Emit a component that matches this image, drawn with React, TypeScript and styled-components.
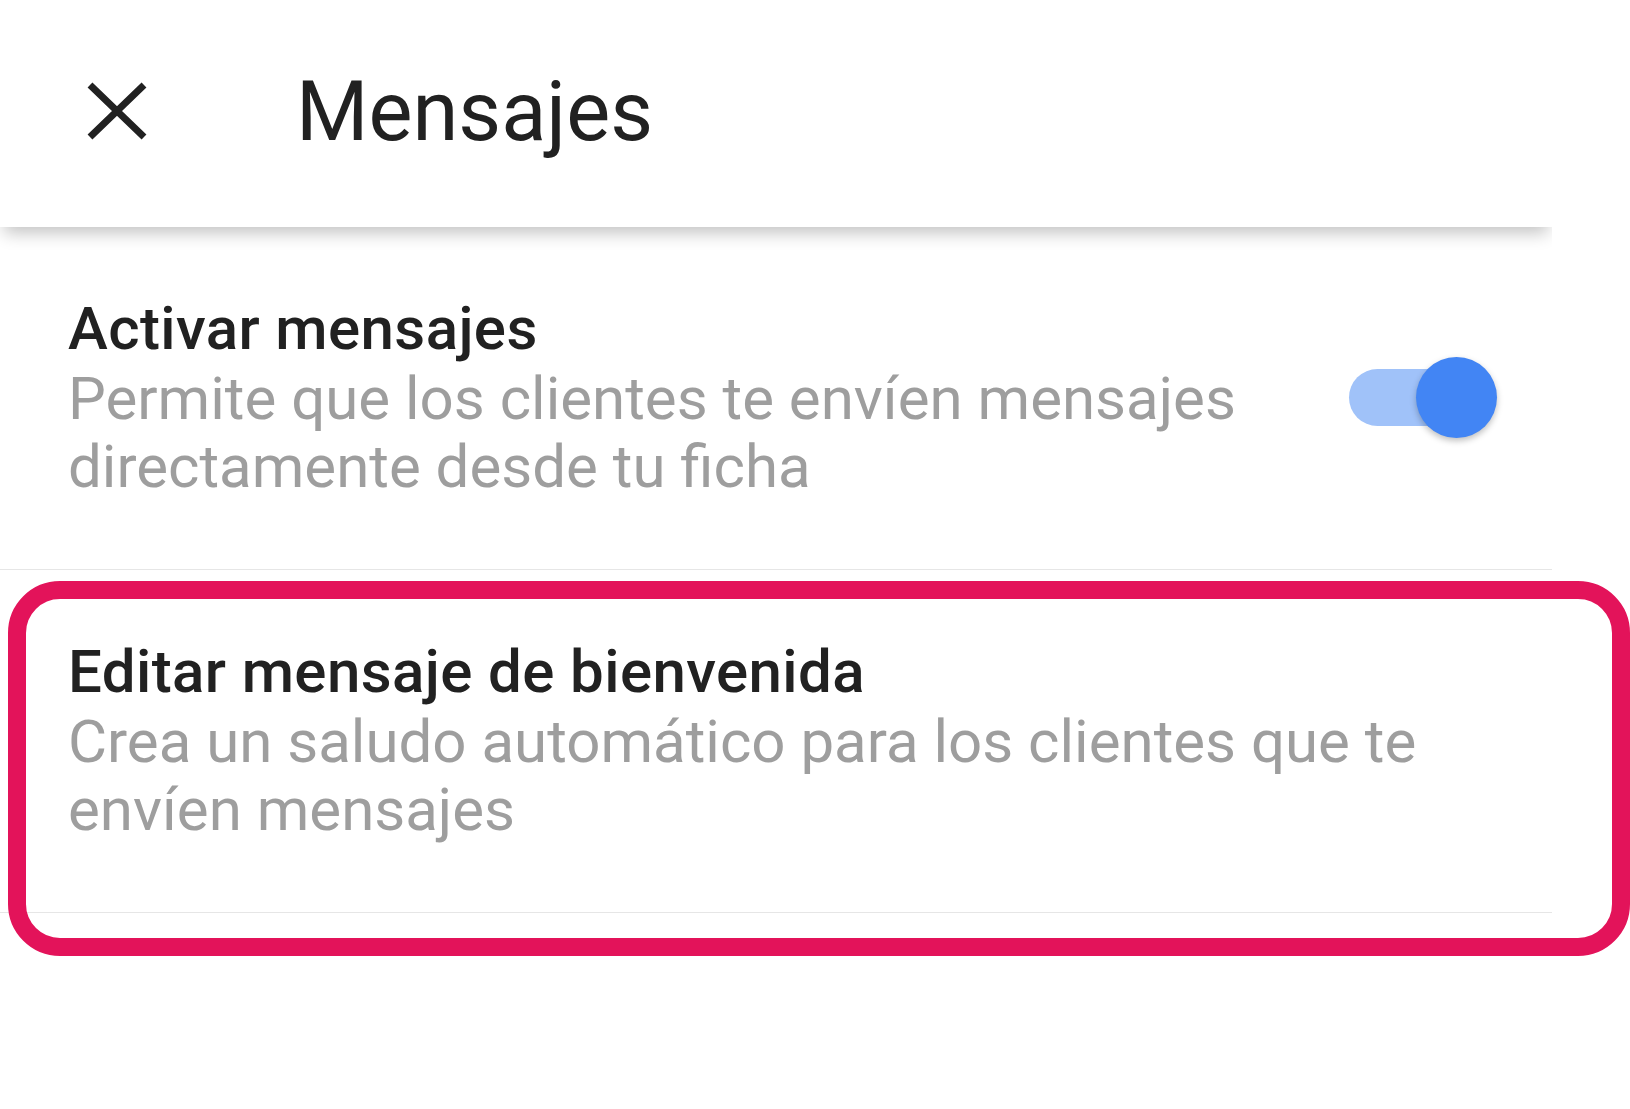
import React from "react";
import styled, { createGlobalStyle } from "styled-components";

const Global = createGlobalStyle`
  html, body { margin: 0; padding: 0; background: #ffffff; }
  body { font-family: Roboto, "Noto Sans", Arial, sans-serif; }
`;

const Page = styled.div`
  position: relative;
  width: 1630px;
  height: 1109px;
  background: #ffffff;
  overflow: hidden;
`;

const Screen = styled.div`
  width: 1552px;
  display: flex;
  flex-direction: column;
`;

const Header = styled.header`
  position: relative;
  z-index: 1;
  height: 227px;
  display: flex;
  align-items: center;
  padding-left: 86px;
  background: #ffffff;
  box-shadow: 0 10px 16px -4px rgba(0, 0, 0, 0.24);
  clip-path: inset(0 0 -40px 0);
`;

const CloseButton = styled.button`
  width: 62px;
  height: 58px;
  padding: 0;
  border: 0;
  background: none;
  display: flex;
  margin-top: -5px;
`;

const Title = styled.h1`
  margin: -4px 0 0 148px;
  font-family: Roboto, sans-serif;
  font-weight: 400;
  font-size: 83px;
  line-height: 1;
  color: #212121;
`;

const Row = styled.div`
  display: flex;
  align-items: center;
  padding: 66px 55px 68px 68px;
  border-bottom: 1px solid #e6e6e6;
`;

const TextCol = styled.div<{ $narrow?: boolean }>`
  flex: 1;
  min-width: 0;
  padding-right: ${(p) => (p.$narrow ? "100px" : "14px")};
`;

const RowTitle = styled.div`
  font-family: Roboto, sans-serif;
  font-weight: 500;
  font-size: 60px;
  line-height: 72px;
  letter-spacing: 0.4px;
  color: #212121;
`;

const RowSub = styled.div`
  font-family: Roboto, sans-serif;
  font-weight: 400;
  font-size: 60px;
  line-height: 68px;
  color: #9e9e9e;
`;

const Switch = styled.div`
  position: relative;
  width: 148px;
  height: 81px;
  flex: none;
`;

const Track = styled.div`
  position: absolute;
  left: 0;
  top: 12px;
  width: 138px;
  height: 57px;
  border-radius: 29px;
  background: #a0c2f9;
`;

const Thumb = styled.div`
  position: absolute;
  right: 0;
  top: 0;
  width: 81px;
  height: 81px;
  border-radius: 50%;
  background: #4285f4;
  box-shadow: 0 3px 6px rgba(0, 0, 0, 0.25);
`;

const Highlight = styled.div`
  position: absolute;
  left: 8px;
  top: 581px;
  width: 1622px;
  height: 375px;
  box-sizing: border-box;
  border: 18px solid #e3135a;
  border-radius: 52px;
  pointer-events: none;
`;

export default function App() {
  return (
    <>
      <Global />
      <Page>
        <Screen>
          <Header>
            <CloseButton aria-label="Cerrar">
              <svg width="62" height="58" viewBox="0 0 62 58">
                <path
                  d="M4 3 L58 55 M58 3 L4 55"
                  stroke="#212121"
                  strokeWidth="7"
                  fill="none"
                />
              </svg>
            </CloseButton>
            <Title>Mensajes</Title>
          </Header>
          <Row>
            <TextCol $narrow>
              <RowTitle>Activar mensajes</RowTitle>
              <RowSub>
                Permite que los clientes te envíen mensajes directamente desde tu ficha
              </RowSub>
            </TextCol>
            <Switch>
              <Track />
              <Thumb />
            </Switch>
          </Row>
          <Row>
            <TextCol>
              <RowTitle>Editar mensaje de bienvenida</RowTitle>
              <RowSub>
                Crea un saludo automático para los clientes que te envíen mensajes
              </RowSub>
            </TextCol>
          </Row>
        </Screen>
        <Highlight />
      </Page>
    </>
  );
}
